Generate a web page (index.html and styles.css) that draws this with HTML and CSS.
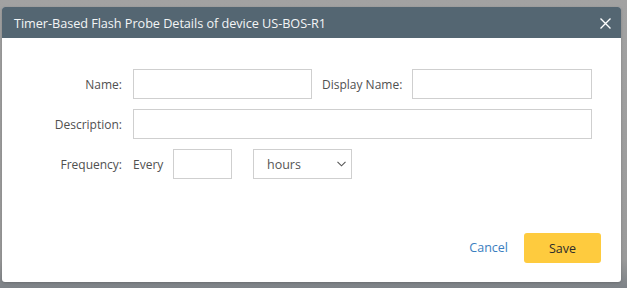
FILE: index.html
```html
<!DOCTYPE html>
<html lang="en">
<head>
    <meta charset="UTF-8">
    <title>Timer-Based Flash Probe Details</title>
    <link rel="stylesheet" href="styles.css">
</head>
<body>
    <div class="backdrop">
        <div class="modal">
            <div class="modal-header">
                <span class="modal-title">Timer-Based Flash Probe Details of device US-BOS-R1</span>
                <button class="close-btn" aria-label="Close">
                    <svg width="11" height="11" viewBox="0 0 11 11">
                        <path d="M0.5 0.5 L10.5 10.5 M10.5 0.5 L0.5 10.5" stroke="#ffffff" stroke-width="1.4" fill="none"/>
                    </svg>
                </button>
            </div>
            <div class="modal-body">
                <div class="form-row">
                    <label class="form-label">Name:</label>
                    <div class="field-group">
                        <input class="text-input name-input" type="text">
                        <label class="inline-label">Display Name:</label>
                        <input class="text-input display-input" type="text">
                    </div>
                </div>
                <div class="form-row">
                    <label class="form-label">Description:</label>
                    <div class="field-group">
                        <input class="text-input desc-input" type="text">
                    </div>
                </div>
                <div class="form-row">
                    <label class="form-label">Frequency:</label>
                    <div class="field-group">
                        <span class="every">Every</span>
                        <input class="text-input freq-input" type="text">
                        <div class="select-box">
                            <span>hours</span>
                            <svg width="9" height="6" viewBox="0 0 9 6">
                                <path d="M0.5 0.8 L4.5 4.8 L8.5 0.8" stroke="#555" stroke-width="1.1" fill="none"/>
                            </svg>
                        </div>
                    </div>
                </div>
            </div>
            <div class="modal-footer">
                <a class="cancel-link" href="#">Cancel</a>
                <button class="save-btn">Save</button>
            </div>
        </div>
    </div>
</body>
</html>
```

FILE: styles.css
```css
* {
    margin: 0;
    padding: 0;
    box-sizing: border-box;
}

body {
    font-family: 'Open Sans', 'Noto Sans', sans-serif;
    background-color: #9c9c9c;
    width: 627px;
    height: 288px;
    overflow: hidden;
}

.backdrop {
    height: 288px;
    padding: 7px 6px 0 2px;
    background: linear-gradient(to bottom, #a2a2a2 0%, #9a9a9a 90%, #7d8287 100%);
}

.modal {
    width: 619px;
    height: 275px;
    background-color: #fff;
    border-radius: 3px;
    overflow: hidden;
    display: flex;
    flex-direction: column;
    box-shadow: 0 1px 3px rgba(0, 0, 0, 0.2);
}

.modal-header {
    height: 31px;
    background-color: #546672;
    display: flex;
    align-items: center;
    justify-content: space-between;
    padding: 0 10px 0 12px;
}

.modal-title {
    color: #f3f5f6;
    font-size: 12.7px;
    letter-spacing: -0.05px;
}

.close-btn {
    background: none;
    border: none;
    display: flex;
    align-items: center;
    cursor: pointer;
    margin-top: 1px;
}

.modal-body {
    flex: 1;
    padding-top: 31px;
    display: flex;
    flex-direction: column;
    gap: 10px;
}

.form-row {
    display: flex;
    align-items: center;
    gap: 11px;
}

.form-label {
    width: 120px;
    text-align: right;
    font-size: 12px;
    color: #505050;
}

.field-group {
    display: flex;
    align-items: center;
}

.text-input {
    height: 30px;
    border: 1px solid #cfcfcf;
    border-radius: 0;
    background: #fff;
    outline: none;
}

.name-input {
    width: 179px;
}

.inline-label {
    font-size: 12px;
    color: #505050;
    margin-left: 10px;
    width: 90px;
}

.display-input {
    width: 180px;
}

.desc-input {
    width: 459px;
}

.every {
    font-size: 12px;
    color: #505050;
    width: 40px;
}

.freq-input {
    width: 59px;
}

.select-box {
    margin-left: 21px;
    width: 99px;
    height: 30px;
    border: 1px solid #cfcfcf;
    display: flex;
    align-items: center;
    justify-content: space-between;
    padding: 0 5px 0 13px;
    font-size: 12.5px;
    color: #555;
}

.modal-footer {
    height: 66px;
    display: flex;
    align-items: flex-start;
    justify-content: flex-end;
    gap: 16px;
    padding-right: 20px;
    padding-top: 17px;
}

.cancel-link {
    color: #3a7ec0;
    font-size: 12.5px;
    text-decoration: none;
    line-height: 30px;
}

.save-btn {
    width: 77px;
    height: 30px;
    background-color: #fecb3e;
    border: none;
    border-radius: 3px;
    font-family: inherit;
    font-size: 12.5px;
    color: #2c2c2c;
    cursor: pointer;
}
```
